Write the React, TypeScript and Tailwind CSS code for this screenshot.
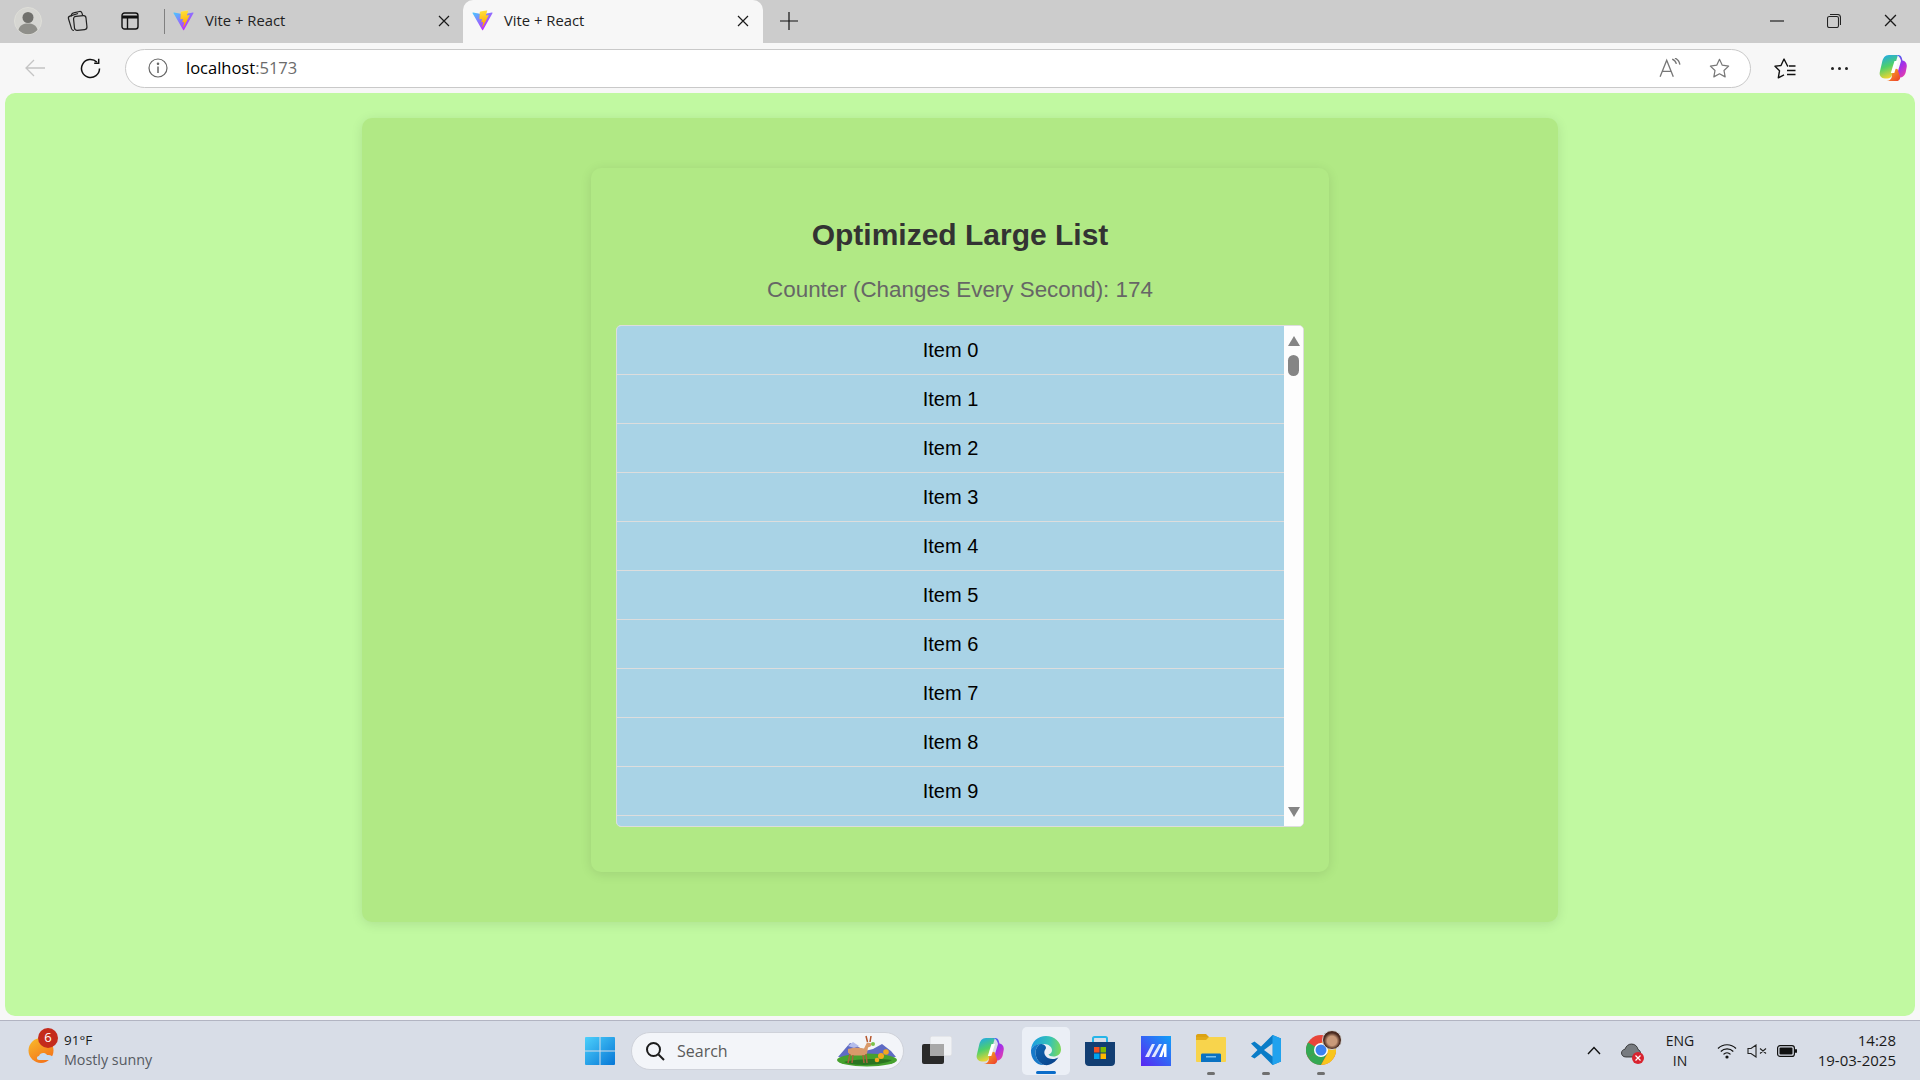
import React from 'react';

const uiFont = "font-['Open_Sans',sans-serif]";

const ViteLogo = ({ id }: { id: string }) => (
  <svg width="21" height="21" viewBox="0 0 410 404" fill="none">
    <path d="M399.641 59.5246L215.643 388.545C211.844 395.338 202.084 395.378 198.228 388.618L10.5817 59.5563C6.38087 52.1896 12.6802 43.2665 21.0281 44.7586L205.223 77.6824C206.398 77.8924 207.601 77.8904 208.776 77.6763L389.119 44.8058C397.439 43.2894 403.768 52.1434 399.641 59.5246Z" fill={`url(#${id}a)`} />
    <path d="M292.965 1.5744L156.801 28.2552C154.563 28.6937 152.906 30.5903 152.771 32.8664L144.395 174.33C144.198 177.662 147.258 180.248 150.51 179.498L188.42 170.749C191.967 169.931 195.172 173.055 194.443 176.622L183.18 231.775C182.422 235.487 185.907 238.661 189.532 237.56L212.947 230.446C216.577 229.344 220.065 232.527 219.297 236.242L201.398 322.875C200.278 328.294 207.486 331.249 210.492 326.603L212.5 323.5L323.454 102.072C325.312 98.3645 322.108 94.137 318.036 94.9228L279.014 102.454C275.347 103.161 272.227 99.746 273.262 96.1583L298.731 7.86689C299.767 4.27314 296.636 0.855181 292.965 1.5744Z" fill={`url(#${id}b)`} />
    <defs>
      <linearGradient id={`${id}a`} x1="6" y1="33" x2="235" y2="344" gradientUnits="userSpaceOnUse">
        <stop stopColor="#41D1FF" />
        <stop offset="1" stopColor="#BD34FE" />
      </linearGradient>
      <linearGradient id={`${id}b`} x1="194.651" y1="8.818" x2="236.076" y2="292.989" gradientUnits="userSpaceOnUse">
        <stop stopColor="#FFEA83" />
        <stop offset="0.0833" stopColor="#FFDD35" />
        <stop offset="1" stopColor="#FFA800" />
      </linearGradient>
    </defs>
  </svg>
);

const CloseIcon = ({ size = 12 }: { size?: number }) => (
  <svg width={size} height={size} viewBox="0 0 12 12" fill="none" stroke="#1a1a1a" strokeWidth="1.2">
    <path d="M1 1l10 10M11 1L1 11" />
  </svg>
);

const CopilotIcon = ({ id, size }: { id: string; size: number }) => (
  <svg width={size} height={size} viewBox="0 0 28 28">
    <defs>
      <linearGradient id={`${id}l`} x1="0.2" y1="0" x2="0.5" y2="1">
        <stop offset="0" stopColor="#20a8ea" />
        <stop offset="0.5" stopColor="#4fd06a" />
        <stop offset="1" stopColor="#f8d52f" />
      </linearGradient>
      <linearGradient id={`${id}r`} x1="0.2" y1="0" x2="0.8" y2="1">
        <stop offset="0" stopColor="#2f6cf0" />
        <stop offset="0.5" stopColor="#a52fe8" />
        <stop offset="1" stopColor="#e83fa8" />
      </linearGradient>
      <linearGradient id={`${id}b`} x1="0" y1="0" x2="1" y2="1">
        <stop offset="0" stopColor="#f8b820" />
        <stop offset="1" stopColor="#ee3d2d" />
      </linearGradient>
    </defs>
    <path d="M10 1h7.500c.5 0 1 .3 1.200.8L13 21c-.6 2-2.200 3.500-4.500 3.500H6c-3.800 0-6-3-5.200-6.500l2.200-9.500C3.900 4 6 1 10 1z" fill={`url(#${id}l)`} />
    <path d="M16 1h3c2 0 3.300 1.100 3.800 3l.7 2.600c2.800.5 4.800 3 4.200 6.400l-1 5.200c-.6 3-3 5.300-6.200 5.300h-3.500l5-16.500C21.500 3.800 19.500 1 16 1z" fill={`url(#${id}r)`} />
    <path d="M13.500 14.500l5 .5 2.500 7.500c.6 2.300-.9 4.500-3 4.500H7.500c2.500 0 4.600-1.300 5.300-4z" fill={`url(#${id}b)`} />
    <path d="M15.500 7h3.500l-3.700 12h-3.500z" fill="#ffffff" />
  </svg>
);

const TabStrip = () => (
  <div className="flex h-[43px] items-stretch bg-[#cccccc]">
    <div className="ml-[14px] flex w-[28px] items-center pb-[2px]">
      <svg width="28" height="28" viewBox="0 0 28 28">
        <circle cx="14" cy="14" r="13.500" fill="#d6d6d2" stroke="#dedeD8" />
        <circle cx="14" cy="10.500" r="5.500" fill="#70706c" />
        <path d="M4.500 23c1-5 5-6.500 9.500-6.500s8.500 1.500 9.500 6.500c-2.500 2.800-6 4.300-9.500 4.300S7 25.800 4.500 23z" fill="#8f8f8a" />
      </svg>
    </div>
    <div className="ml-[21px] flex w-[28px] items-center justify-center pb-[1px]">
      <svg width="22" height="22" viewBox="0 0 22 22" fill="none" stroke="#222" strokeWidth="1.200" strokeLinejoin="round">
        <rect x="8" y="6" width="12.500" height="14" rx="2.500" transform="rotate(-6 14 13)" />
        <path d="M8 20.500c-1.200 0-2-.6-2.400-1.600L2.500 8.800c-.4-1.300.2-2.300 1.400-2.700L12 3.500" />
        <path d="M5 6.500l.5-1.800c.3-1.100 1-1.700 2.100-1.900L13.500 1.500c1.200-.2 2 .3 2.400 1.400l.7 2.300" />
      </svg>
    </div>
    <div className="ml-[25px] flex w-[28px] items-center justify-center pb-[1px]">
      <svg width="18" height="18" viewBox="0 0 18 18" fill="none" stroke="#111" strokeWidth="1.400">
        <rect x="1" y="1" width="16" height="16" rx="2.500" />
        <path d="M1 5h16" strokeWidth="3" />
        <path d="M6.500 5v12" />
      </svg>
    </div>
    <div className="ml-[20px] my-[9px] w-[1px] bg-[#808080]" />
    <div className={`flex w-[298px] items-center pb-[2px] pl-[8px] pr-[13px] ${uiFont}`}>
      <ViteLogo id="t1" />
      <span className="ml-[11px] flex-1 text-[14.800px] text-[#1f1f1f]">Vite + React</span>
      <CloseIcon />
    </div>
    <div className={`flex w-[300px] items-center rounded-t-[10px] bg-[#f7f7f7] pb-[2px] pl-[9px] pr-[14px] ${uiFont}`}>
      <ViteLogo id="t2" />
      <span className="ml-[11px] flex-1 text-[14.800px] text-[#1f1f1f]">Vite + React</span>
      <CloseIcon />
    </div>
    <div className="ml-[17px] flex items-center pb-[2px]">
      <svg width="18" height="18" viewBox="0 0 18 18" stroke="#111" strokeWidth="1.200">
        <path d="M9 0v18M0 9h18" />
      </svg>
    </div>
    <div className="flex-1" />
    <div className="flex w-[57px] items-center justify-center pb-[2px]">
      <svg width="14" height="2" viewBox="0 0 14 2" stroke="#222" strokeWidth="1.200">
        <path d="M0 1h14" />
      </svg>
    </div>
    <div className="flex w-[57px] items-center justify-center pb-[2px]">
      <svg width="14" height="14" viewBox="0 0 14 14" fill="none" stroke="#222" strokeWidth="1.100">
        <rect x="0.500" y="2.500" width="11" height="11" rx="1.800" />
        <path d="M3 .5h7.500c1.700 0 3 1.300 3 3V11" />
      </svg>
    </div>
    <div className="flex w-[58px] items-center justify-center pb-[2px] pr-[1px]">
      <CloseIcon size={13} />
    </div>
  </div>
);

const Toolbar = () => (
  <div className="flex h-[50px] items-center bg-[#f7f7f7]">
    <div className="ml-[24px] flex w-[22px] justify-center">
      <svg width="21" height="18" viewBox="0 0 21 18" fill="none" stroke="#c4c4c4" strokeWidth="1.300">
        <path d="M20 9H1M9 1L1 9l8 8" />
      </svg>
    </div>
    <div className="ml-[33px] flex w-[22px] justify-center">
      <svg width="21" height="21" viewBox="0 0 21 21" fill="none" stroke="#111" strokeWidth="1.500">
        <path d="M19.500 10.500a9 9 0 1 1-2.700-6.400" />
        <path d="M18.700 .8v4.400h-4.500" />
      </svg>
    </div>
    <div className={`ml-[24px] flex h-[39px] w-[1626px] items-center rounded-full border border-[#c9c9c9] bg-white ${uiFont}`}>
      <div className="ml-[22px] flex w-[20px] justify-center">
        <svg width="20" height="20" viewBox="0 0 20 20" fill="none" stroke="#666" strokeWidth="1.200">
          <circle cx="10" cy="10" r="9" />
          <path d="M10 8.500v6.500" strokeWidth="1.500" />
          <circle cx="10" cy="5.800" r="0.700" fill="#666" />
        </svg>
      </div>
      <span className="ml-[18px] flex-1 text-[16.500px] text-black">
        localhost<span className="text-[#6b6b6b]">:5173</span>
      </span>
      <div className="flex w-[28px] justify-center">
        <svg width="22" height="20" viewBox="0 0 20 18" fill="none" stroke="#777" strokeWidth="1.200">
          <path d="M1 17L7 2l6 15M3.200 12h7.600" />
          <path d="M12 1c2 .800 3.300 2.300 3.800 4.300M14.500 0c2.500 1 4 3 4.500 6" />
        </svg>
      </div>
      <div className="ml-[21px] mr-[17px] flex w-[28px] justify-center">
        <svg width="21" height="20" viewBox="0 0 24 23" fill="none" stroke="#777" strokeWidth="1.400" strokeLinejoin="round">
          <path d="M12 1.500l3.200 6.800 7.300 1-5.300 5.100 1.300 7.300-6.500-3.500-6.500 3.500 1.300-7.300L1.500 9.300l7.300-1z" />
        </svg>
      </div>
    </div>
    <div className="ml-[20px] flex w-[28px] justify-center">
      <svg width="22" height="21" viewBox="0 0 22 21" fill="none" stroke="#111" strokeWidth="1.400" strokeLinejoin="round">
        <path d="M14 8.500L13.300 7.500 10 1 7 7.500l-6 .8 4.500 4.500-1.200 7 5.700-3" />
        <path d="M15 8h6.500M13 12.500h8.500M13 16.500h8.500" />
      </svg>
    </div>
    <div className="ml-[26px] flex w-[28px] justify-center gap-[4px]">
      <span className="h-[3px] w-[3px] rounded-full bg-[#222]" />
      <span className="h-[3px] w-[3px] rounded-full bg-[#222]" />
      <span className="h-[3px] w-[3px] rounded-full bg-[#222]" />
    </div>
    <div className="ml-[26px] flex w-[28px] justify-center">
      <CopilotIcon id="c1" size={28} />
    </div>
  </div>
);

const items = Array.from({ length: 10 }, (_, i) => `Item ${i}`);

const ListBox = () => (
  <div className="flex h-[502px] w-[688px] overflow-hidden rounded-[5px] border border-[#dddddd] bg-white">
    <div className="h-full w-[667px] overflow-hidden bg-[#a9d3e6]">
      {items.map((item) => (
        <div
          key={item}
          className="flex h-[49px] items-center justify-center border-b border-[#dddddd] text-[20px] text-black"
        >
          {item}
        </div>
      ))}
    </div>
    <div className="flex flex-1 flex-col items-center bg-[#fdfdfd] pt-[10px]">
      <div className="h-0 w-0 border-x-[6.500px] border-b-[10px] border-x-transparent border-b-[#858585]" />
      <div className="mt-[9px] h-[21px] w-[11px] rounded-full bg-[#858585]" />
      <div className="flex-1" />
      <div className="mb-[9px] h-0 w-0 border-x-[6.500px] border-t-[10px] border-x-transparent border-t-[#858585]" />
    </div>
  </div>
);

const Page = () => (
  <div className="mx-[5px] flex h-[923px] justify-center rounded-[10px] bg-[#c1f9a1] pt-[25px] font-['Liberation_Sans',sans-serif]">
    <div className="flex h-[804px] w-[1196px] justify-center rounded-[10px] bg-[#b1e985] pt-[50px] shadow-[0_2px_12px_rgba(0,0,0,0.1)]">
      <div className="flex h-[704px] w-[738px] flex-col items-center rounded-[10px] bg-[#b1e985] pt-[50px] shadow-[0_2px_12px_rgba(0,0,0,0.1)]">
        <h2 className="text-[30px] font-bold leading-[34px] text-[#333333]">Optimized Large List</h2>
        <p className="mt-[25px] text-[22.400px] leading-[26px] text-[#666666]">Counter (Changes Every Second): 174</p>
        <div className="mt-[22px]">
          <ListBox />
        </div>
      </div>
    </div>
  </div>
);

const StartIcon = () => (
  <svg width="30" height="30" viewBox="0 0 30 30">
    <defs>
      <linearGradient id="win" x1="0" y1="0" x2="1" y2="1">
        <stop offset="0" stopColor="#4dd0fb" />
        <stop offset="1" stopColor="#0676d6" />
      </linearGradient>
    </defs>
    <path d="M1 1h13.500v13.500H0V2a1 1 0 0 1 1-1zM15.500 1H29a1 1 0 0 1 1 1v12.500H15.500zM0 15.500h14.500V29H1a1 1 0 0 1-1-1zM15.500 15.500H30V28a1 1 0 0 1-1 1H15.500z" fill="url(#win)" />
  </svg>
);

const DeerScene = () => (
  <svg width="62" height="32" viewBox="0 0 62 32">
    <path d="M2 22L14 8l7 3 8 5 8-2 9-5 9 7 5 6z" fill="#5f6bc4" />
    <path d="M12 11l5-4 6 4-5 2z" fill="#b4bdec" />
    <ellipse cx="31" cy="25" rx="30" ry="6.500" fill="#46a12e" />
    <path d="M8 27c10-3 34-4 48-2-6 5-38 7-48 2z" fill="#2a7420" />
    <path d="M12 14c5-1.500 12-1.500 16-.5l3-6 5 1-1.500 3-2.500 1-1 6-3 2H15l-3-3z" fill="#d99a6a" />
    <path d="M14 19l-2 9M17 20l-1 8M27 20l1 8M30 19l1 9" stroke="#a9643a" strokeWidth="1.500" fill="none" />
    <path d="M30 1l1.500 6M35 1l-1 6" stroke="#b5552c" strokeWidth="1.500" />
    <circle cx="37" cy="9" r="2" fill="#7cc24a" />
    <circle cx="45" cy="21" r="3" fill="#f2a81d" />
    <circle cx="50" cy="17" r="2.800" fill="#f2a81d" />
    <circle cx="41" cy="25" r="2.300" fill="#f2a81d" />
  </svg>
);

const EdgeIcon = () => (
  <svg width="32" height="32" viewBox="0 0 32 32">
    <defs>
      <linearGradient id="edgeTop" x1="0" y1="0.5" x2="1" y2="0.6">
        <stop offset="0" stopColor="#1b9de2" />
        <stop offset="0.6" stopColor="#36c3b5" />
        <stop offset="1" stopColor="#7ed957" />
      </linearGradient>
      <linearGradient id="edgeBottom" x1="0" y1="0" x2="1" y2="1">
        <stop offset="0" stopColor="#0c67b4" />
        <stop offset="1" stopColor="#0a3f86" />
      </linearGradient>
    </defs>
    <path d="M1 15C1.500 6.500 8 1 16 1c8.500 0 15 6 15 13.500 0 4.500-3.500 7-7.500 7-2.500 0-4.500-1-5-2 2.500-1 3.500-2.500 3.500-4.500 0-3-3.500-6-8-6C7 9 2.500 11 1 15z" fill="url(#edgeTop)" />
    <path d="M1 15c1.500-4 6-6 9.500-6-3.500 2-5 5-5 8.500 0 6 4 11 9 12.500C7 31 .5 24 1 15z" fill="#1679c9" />
    <path d="M14.500 30c-5-1.500-9-6.500-9-12.500 0-3.500 1.500-6.500 5-8.500 3 0 5.500 1.500 5.500 4 0 .5-1 1.500-1.500 3-1 3.500 2 8 8 8 2.500 0 4.500-.800 6-1.800C25.500 27 20 31 14.500 30z" fill="url(#edgeBottom)" />
  </svg>
);

const StoreIcon = () => (
  <svg width="30" height="32" viewBox="0 0 30 32" fill="none">
    <path d="M8 8V3.500C8 2.500 8.500 2 9.500 2h11c1 0 1.500.5 1.500 1.500V8" stroke="#26b5e8" strokeWidth="2" />
    <path d="M0 7h30v20c0 2.500-1.500 4-4 4H4c-2.500 0-4-1.500-4-4z" fill="#123e73" />
    <rect x="9" y="12" width="5.500" height="5.500" fill="#f25022" />
    <rect x="15.500" y="12" width="5.500" height="5.500" fill="#7fba00" />
    <rect x="9" y="18.500" width="5.500" height="5.500" fill="#00a4ef" />
    <rect x="15.500" y="18.500" width="5.500" height="5.500" fill="#ffb900" />
  </svg>
);

const MailLikeIcon = () => (
  <svg width="30" height="30" viewBox="0 0 30 30">
    <defs>
      <linearGradient id="ma" x1="0" y1="1" x2="1" y2="0">
        <stop offset="0" stopColor="#5a24f2" />
        <stop offset="1" stopColor="#11a0f8" />
      </linearGradient>
    </defs>
    <rect width="30" height="30" fill="url(#ma)" />
    <path d="M4 21L11 8h3L8 21zM10.500 21L18 8h3l-7 13z" fill="#ffffff" opacity="0.85" />
    <path d="M18 21l5-13h2.500v13H23v-6l-2 6z" fill="#ffffff" />
  </svg>
);

const FilesIcon = () => (
  <svg width="30" height="28" viewBox="0 0 30 28">
    <path d="M0 2c0-1 .5-2 2-2h8l3 3h-13z" fill="#dca212" />
    <path d="M0 3h29c.5 0 1 .5 1 1v23c0 .5-.5 1-1 1H1c-.5 0-1-.5-1-1z" fill="#f8d44c" />
    <path d="M0 3h13l-3 3H0z" fill="#e2ab18" />
    <path d="M5 21c0-1 .5-1.500 1.500-1.500h17c1 0 1.500.5 1.500 1.500v7H5z" fill="#0a72c2" />
    <rect x="10" y="22" width="10" height="1.500" fill="#7cc2ee" />
  </svg>
);

const VSCodeIcon = () => (
  <svg width="30" height="30" viewBox="0 0 30 30">
    <path d="M21.500 0L30 3.500v23L21.500 30 10 18.500 3.500 23.500 0 21.500 6.500 15 0 8.500 3.500 6.500 10 11.500z" fill="#0a7cc7" />
    <path d="M21.500 0L30 3.500v23L21.500 30z" fill="#20a2ee" />
    <path d="M21.500 8.500L13 15l8.500 6.500z" fill="#d8dde7" />
  </svg>
);

const ChromeIcon = () => (
  <svg width="30" height="30" viewBox="0 0 30 30">
    <circle cx="15" cy="15" r="15" fill="#e8453a" />
    <path d="M15 15L2 22.500A15 15 0 0 1 2 7.500z" fill="#34a853" />
    <path d="M2 22.500A15 15 0 0 0 15 30l0 0L21.500 18 15 15z" fill="#34a853" />
    <path d="M15 30A15 15 0 0 0 28 7.500H15l6.500 11z" fill="#f8c51c" />
    <circle cx="15" cy="15" r="7" fill="#ffffff" />
    <circle cx="15" cy="15" r="5.500" fill="#3b82f0" />
  </svg>
);

const Indicator = () => <span className="h-[3px] w-[8px] rounded-full bg-[#6f6f6f]" />;

const Taskbar = () => (
  <div className={`flex h-[60px] items-center border-t border-[#b2b4c2] bg-[#d8dde7] ${uiFont}`}>
    <div className="relative ml-[28px] flex w-[28px] items-center">
      <svg width="28" height="26" viewBox="0 0 28 26">
        <defs>
          <linearGradient id="sun" x1="0" y1="0" x2="0.6" y2="1">
            <stop offset="0" stopColor="#f8bd2c" />
            <stop offset="1" stopColor="#f4751b" />
          </linearGradient>
        </defs>
        <circle cx="13" cy="12.500" r="12.500" fill="url(#sun)" />
        <path d="M11 22c-2.500 0-3-3.500 0-4 1-3.500 6-4 8-1 3.500-.5 6 1 6 3 0 1.500-1 2-3 2z" fill="#c6dcf2" />
      </svg>
      <span className="absolute -top-[10px] left-[10px] flex h-[20px] w-[20px] items-center justify-center rounded-full bg-[#c42b1c] text-[13px] text-white">
        6
      </span>
    </div>
    <div className="ml-[8px] -mt-[2px] flex w-[110px] flex-col">
      <span className="text-[13.500px] leading-[20px] text-[#1a1a1a]">91°F</span>
      <span className="text-[14.300px] leading-[20px] text-[#555a62]">Mostly sunny</span>
    </div>
    <div className="ml-[411px]">
      <StartIcon />
    </div>
    <div className="ml-[16px] flex h-[38px] w-[273px] items-center rounded-full border border-[#cfd2da] bg-[#f3f5f9] pl-[13px] pr-[5px]">
      <svg width="20" height="20" viewBox="0 0 20 20" fill="none" stroke="#1c1c1c" strokeWidth="2">
        <circle cx="8.500" cy="8.500" r="6.500" />
        <path d="M13.500 13.500L19 19" />
      </svg>
      <span className="ml-[12px] flex-1 text-[16px] text-[#5a5a5a]">Search</span>
      <DeerScene />
    </div>
    <div className="ml-[18px] flex h-[30px] w-[30px] flex-col">
      <svg width="30" height="30" viewBox="0 0 30 30">
        <rect x="8" y="0" width="22" height="20" rx="2" fill="#f0f2f5" stroke="#d8dae0" />
        <rect x="0" y="8" width="22" height="20" rx="2" fill="#2a2a2a" />
        <rect x="8" y="8" width="14" height="12" fill="#a8a8a8" />
      </svg>
    </div>
    <div className="ml-[24px] flex w-[28px] justify-center">
      <CopilotIcon id="c2" size={28} />
    </div>
    <div className="ml-[18px] flex h-[48px] w-[48px] flex-col items-center justify-between rounded-[5px] bg-[#ebeff6] pt-[8px] pb-[1px]">
      <EdgeIcon />
      <span className="h-[3px] w-[20px] rounded-full bg-[#0a6cc9]" />
    </div>
    <div className="ml-[15px] flex w-[30px] justify-center">
      <StoreIcon />
    </div>
    <div className="ml-[26px] flex w-[30px] justify-center">
      <MailLikeIcon />
    </div>
    <div className="ml-[25px] flex h-[48px] w-[30px] flex-col items-center justify-between pt-[7px]">
      <FilesIcon />
      <Indicator />
    </div>
    <div className="ml-[25px] flex h-[48px] w-[30px] flex-col items-center justify-between pt-[8px]">
      <VSCodeIcon />
      <Indicator />
    </div>
    <div className="relative ml-[25px] flex h-[48px] w-[30px] flex-col items-center justify-between pt-[8px]">
      <ChromeIcon />
      <Indicator />
      <span className="absolute -right-[6px] top-[3px] h-[20px] w-[20px] rounded-full border border-[#d0d0d0] bg-[radial-gradient(circle_at_50%_55%,#c99a7a_0_35%,#4b2b20_60%)]" />
    </div>
    <div className="flex-1" />
    <div className="mr-[19px] flex w-[16px] justify-center">
      <svg width="14" height="9" viewBox="0 0 14 9" fill="none" stroke="#111" strokeWidth="1.400">
        <path d="M1 8l6-6.500L13 8" />
      </svg>
    </div>
    <div className="relative mr-[19px] flex w-[20px] justify-center">
      <svg width="20" height="15" viewBox="0 0 20 15">
        <path d="M5 14C2 14 .5 12 .5 10c0-2 1.500-3.500 3.500-3.800C5 3 7.500 1 10.500 1c3.500 0 6 2.500 6.500 5.500 1.500.5 2.500 2 2.500 3.500 0 2-1.500 4-4.500 4z" fill="#777b80" stroke="#222" strokeWidth="0.800" />
      </svg>
      <span className="absolute -bottom-[6px] -right-[3px] flex h-[12px] w-[12px] items-center justify-center rounded-full bg-[#d8232f]">
        <svg width="6" height="6" viewBox="0 0 6 6" stroke="#fff" strokeWidth="1.200">
          <path d="M.5.5l5 5M5.500.5l-5 5" />
        </svg>
      </span>
    </div>
    <div className="flex w-[40px] flex-col items-center text-[14px] leading-[20px] text-[#1a1a1a]">
      <span>ENG</span>
      <span>IN</span>
    </div>
    <div className="ml-[17px] flex w-[20px] justify-center">
      <svg width="20" height="16" viewBox="0 0 20 16" fill="none" stroke="#111" strokeWidth="1.200">
        <path d="M1 5.500c5-5 13-5 18 0M3.800 8.500c3.500-3.500 9-3.500 12.500 0M6.500 11.300c2-2 5-2 7 0" />
        <circle cx="10" cy="14" r="1" fill="#111" />
      </svg>
    </div>
    <div className="ml-[10px] flex w-[20px] justify-center">
      <svg width="20" height="14" viewBox="0 0 20 14" fill="none" stroke="#222" strokeWidth="1.100">
        <path d="M1 4.500h3L9 1v12L4 9.500H1zM13 4.500l6 5M19 4.500l-6 5" />
      </svg>
    </div>
    <div className="ml-[10px] flex w-[20px] justify-center">
      <svg width="20" height="12" viewBox="0 0 20 12">
        <rect x="0.600" y="0.600" width="16.800" height="10.800" rx="2.500" fill="none" stroke="#111" strokeWidth="1.200" />
        <rect x="2.500" y="2.500" width="13" height="7" rx="1" fill="#111" />
        <rect x="18" y="4" width="2" height="4" rx="1" fill="#111" />
      </svg>
    </div>
    <div className="ml-[21px] mr-[24px] -mt-[2px] flex w-[78px] flex-col items-end whitespace-nowrap text-[15px] leading-[20px] text-[#1a1a1a]">
      <span>14:28</span>
      <span>19-03-2025</span>
    </div>
  </div>
);

export default function App() {
  return (
    <div className="flex h-[1080px] w-[1920px] flex-col overflow-hidden bg-[#f7f7f7]">
      <TabStrip />
      <Toolbar />
      <Page />
      <div className="h-[4px]" />
      <Taskbar />
    </div>
  );
}
